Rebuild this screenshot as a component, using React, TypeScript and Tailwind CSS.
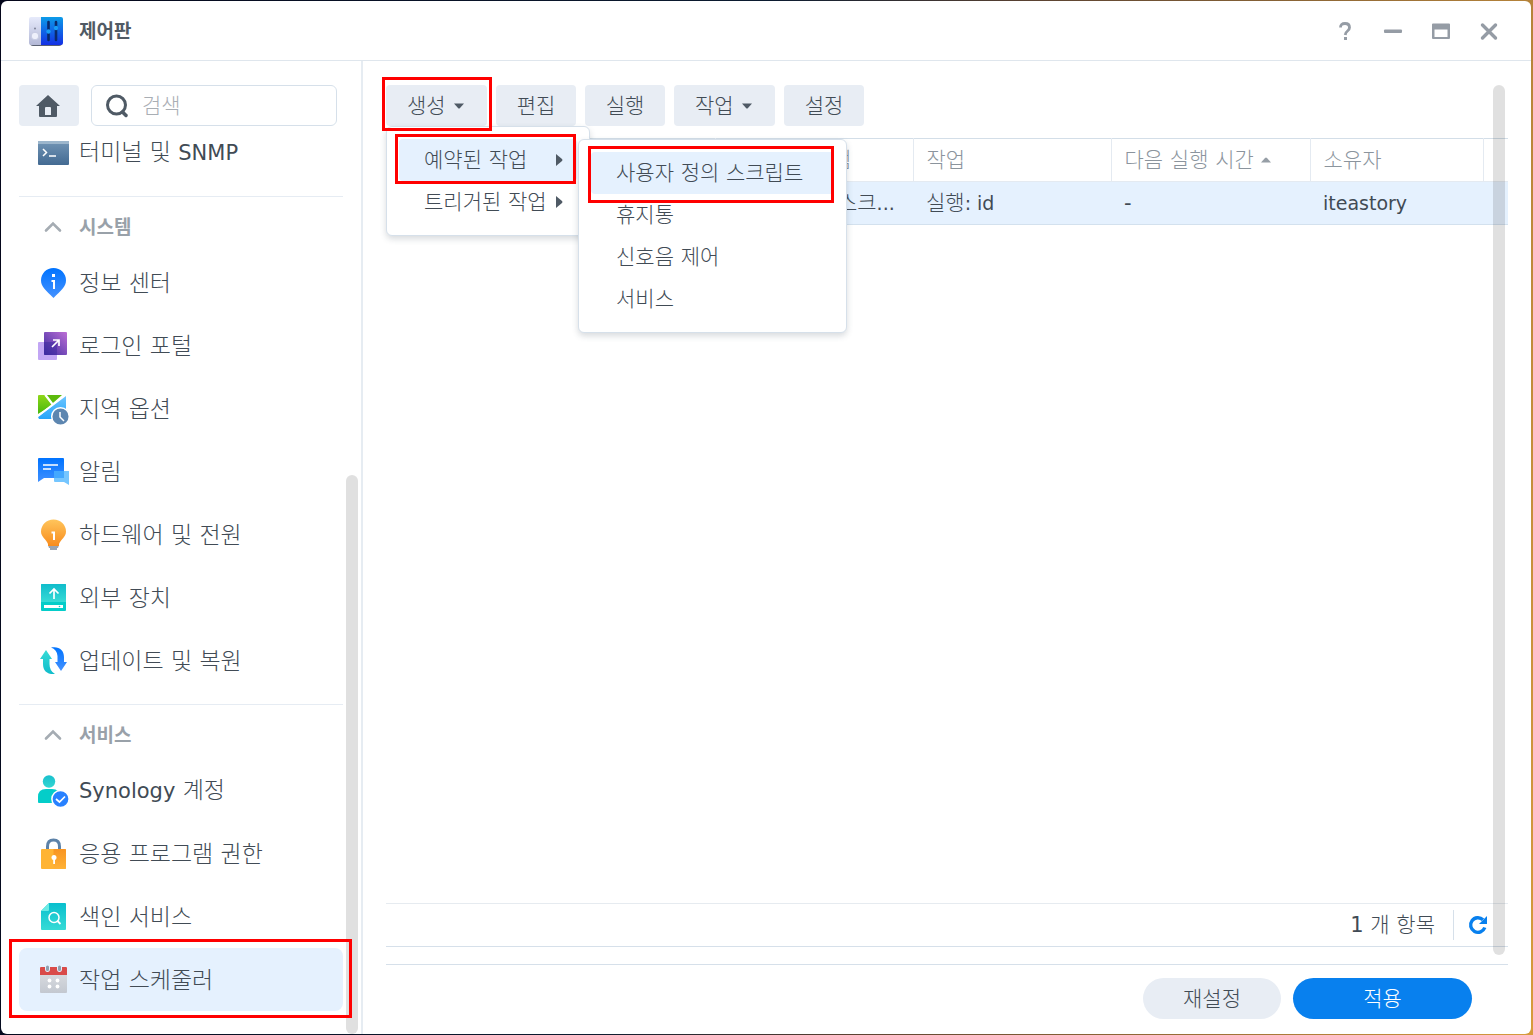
import React from "react";

function Highlight({ className }: { className: string }) {
  return <span aria-hidden="true" className={"pointer-events-none absolute z-20 border-3 border-[#ff0000] " + className} />;
}

function Latin({ children }: { children: string }) {
  return <span className="font-normal">{children}</span>;
}

function AppIcon() {
  return (
    <svg width="34" height="32" viewBox="0 0 34 32" aria-hidden="true">
      <defs>
        <linearGradient id="appBlue" x1="0" y1="0" x2="0" y2="1">
          <stop offset="0" stopColor="#0c9be8" />
          <stop offset="1" stopColor="#1430e4" />
        </linearGradient>
        <linearGradient id="appGray" x1="0" y1="0" x2="0" y2="1">
          <stop offset="0" stopColor="#e6eafb" />
          <stop offset="1" stopColor="#b3b8d6" />
        </linearGradient>
      </defs>
      <rect x="1" y="4" width="32" height="27" rx="3" fill="#5a6072" />
      <path d="M2 2H12V30H2Q0 30 0 28V4Q0 2 2 2Z" fill="url(#appGray)" />
      <path d="M12 2H32Q34 2 34 4V28Q34 30 32 30H12Z" fill="url(#appBlue)" />
      <circle cx="6" cy="13.500" r="1" fill="#7d8297" />
      <circle cx="6" cy="21" r="3.800" fill="#eef0fb" stroke="#c5cae2" strokeWidth="1" />
      <path d="M19.500 7V25M27 7V25" stroke="#0a2a6b" strokeWidth="2.600" strokeLinecap="round" />
      <circle cx="19.500" cy="16.500" r="2.200" fill="#189cf5" />
      <circle cx="27" cy="13" r="2.200" fill="#189cf5" />
    </svg>
  );
}

function Svg({ children }: { children: React.ReactNode }) {
  return (
    <svg width="32" height="32" viewBox="0 0 32 32" className="shrink-0" aria-hidden="true">
      {children}
    </svg>
  );
}

function Grad({ id, a, b, diagonal }: { id: string; a: string; b: string; diagonal?: boolean }) {
  return (
    <defs>
      <linearGradient id={id} x1={diagonal ? "1" : "0"} y1="0" x2="0" y2="1">
        <stop offset="0" stopColor={a} />
        <stop offset="1" stopColor={b} />
      </linearGradient>
    </defs>
  );
}

const terminalIcon = (
  <Svg>
    <Grad id="term" a="#7295b5" b="#436a92" />
    <rect x="0" y="4" width="31" height="24" rx="1" fill="url(#term)" />
    <path d="M1 4H30Q31 4 31 5V7H0V5Q0 4 1 4Z" fill="#9cb6cc" />
    <path d="M5 12L8.500 15.500L5 19M11 19H18" fill="none" stroke="#fff" strokeWidth="1.500" />
  </Svg>
);
const infoIcon = (
  <Svg>
    <Grad id="info" a="#0073ff" b="#4592ff" />
    <path d="M15.500 1C8.500 1 3 6.500 3 13.300C3 20 8 23.500 15.500 31C23 23.500 28 20 28 13.300C28 6.500 22.500 1 15.500 1Z" fill="url(#info)" />
    <path d="M14 7H17V10H14ZM13.500 13H17V22H15V15H13.500Z" fill="#fff" />
  </Svg>
);
const portalIcon = (
  <Svg>
    <Grad id="portal" a="#bd6fd5" b="#3a2ba0" diagonal />
    <rect x="0" y="12" width="19" height="18" rx="1" fill="#c2a6f4" />
    <rect x="6" y="2" width="23" height="23" rx="1" fill="url(#portal)" />
    <path d="M6 12H19V25H6Z" fill="#3b27a0" opacity=".5" />
    <path d="M14 17L21 10M15 10H21V16" fill="none" stroke="#fff" strokeWidth="1.700" />
  </Svg>
);
const regionIcon = (
  <Svg>
    <Grad id="lake" a="#6dc5ff" b="#25a5fa" />
    <Grad id="land" a="#8fd719" b="#46b80d" />
    <path d="M1 2H7L14 12L0 21V3Q0 2 1 2Z" fill="url(#land)" />
    <path d="M9 2H24L15 10Z" fill="#5cba0c" />
    <path d="M28 3V25Q28 26 27 26H1L0 24Z" fill="url(#lake)" />
    <path d="M0 23L27 2M7 2L14 11" stroke="#fff" strokeWidth="1.600" />
    <circle cx="22.500" cy="23.500" r="8.800" fill="#5d86b0" stroke="#fff" strokeWidth="1.500" />
    <path d="M22 19V24L26 28" fill="none" stroke="#fff" strokeWidth="1.500" />
  </Svg>
);
const noticeIcon = (
  <Svg>
    <Grad id="notice" a="#0073ff" b="#4090ff" />
    <path d="M1 2H25Q26 2 26 3V22H6L0 26V3Q0 2 1 2Z" fill="url(#notice)" />
    <path d="M16 15H31V29L26 26H17Q16 26 16 25Z" fill="#75c6ff" />
    <path d="M16 15H26V22H16Z" fill="#43a8ff" />
    <path d="M5 9H20M5 13H13" stroke="#fff" strokeWidth="1.500" />
  </Svg>
);
const bulbIcon = (
  <Svg>
    <Grad id="bulb" a="#ffc55c" b="#f88c1c" />
    <path d="M10 26H21L20 29H19V31H12V29H11Z" fill="#9aa4af" />
    <path d="M15.500 0.500C8.500 0.500 3 6 3 12.500C3 18 8 20 10 25V27H21V25C23 20 28 18 28 12.500C28 6 22.500 0.500 15.500 0.500Z" fill="url(#bulb)" />
    <path d="M13.500 12.500H17V21H15V14.500H13.500Z" fill="#fff" />
  </Svg>
);
const driveIcon = (
  <Svg>
    <Grad id="drive" a="#10bccb" b="#36dbd6" />
    <rect x="3" y="2" width="25" height="27" rx="1" fill="#04cdc9" />
    <path d="M4 2H27Q28 2 28 3V20H3V3Q3 2 4 2Z" fill="url(#drive)" />
    <path d="M16 17V7M11.500 11.500L16 7L20.500 11.500" fill="none" stroke="#fff" strokeWidth="1.700" />
    <path d="M6 23H25V26H6Z" fill="#fff" />
    <circle cx="21.500" cy="24.500" r=".8" fill="#04cdc9" />
  </Svg>
);
const updateIcon = (
  <Svg>
    <Grad id="upA" a="#36dbd6" b="#10bccb" />
    <Grad id="upB" a="#0073ff" b="#4592ff" />
    <path d="M8 5L14 14H11.500V19Q11.500 26 17 29C9 29.500 5 26 5 19V14H2Z" fill="url(#upA)" />
    <path d="M23 26L17 17H19.500V11Q19 4.500 13 2.500C21 1 26 5 26 12V17H29Z" fill="url(#upB)" />
  </Svg>
);
const accountIcon = (
  <Svg>
    <Grad id="acc" a="#18c0cd" b="#34d6d2" />
    <circle cx="11" cy="6.500" r="6.200" fill="url(#acc)" />
    <path d="M8 14H14Q22 14 22 22V28H1Q0 28 0 27V22Q0 14 8 14Z" fill="#04cdc9" />
    <circle cx="22.500" cy="24" r="8.600" fill="#2881ff" stroke="#fff" strokeWidth="1.500" />
    <path d="M18 24L21.500 27L27 21.500" fill="none" stroke="#fff" strokeWidth="1.700" />
  </Svg>
);
const lockIcon = (
  <Svg>
    <Grad id="lock" a="#f89422" b="#ffb236" />
    <path d="M9.500 13V8.500Q9.500 2 15.500 2T21.500 8.500V13" fill="none" stroke="#5d82a8" strokeWidth="3" />
    <rect x="3" y="11" width="25" height="20" rx="1" fill="#ffb434" />
    <path d="M15.500 11H27Q28 11 28 12V30Q28 31 27 31H15.500Z" fill="url(#lock)" />
    <circle cx="16" cy="19.500" r="2.500" fill="#fff" />
    <path d="M15.200 20H17V26H15.200Z" fill="#fff" />
  </Svg>
);
const indexIcon = (
  <Svg>
    <Grad id="index" a="#08bfce" b="#36dbd6" />
    <path d="M11 2H27Q28 2 28 3V28Q28 29 27 29H4Q3 29 3 28V10Z" fill="url(#index)" />
    <path d="M11 2V9Q11 10 10 10H3Z" fill="#6bebe4" />
    <circle cx="16" cy="16.500" r="5" fill="none" stroke="#fff" strokeWidth="1.500" />
    <path d="M19.500 20L22.500 23" stroke="#fff" strokeWidth="1.800" />
  </Svg>
);
const calendarIcon = (
  <Svg>
    <Grad id="cal" a="#d6d9de" b="#c3c8d0" />
    <path d="M2 11H29V28Q29 29 28 29H3Q2 29 2 28Z" fill="url(#cal)" />
    <path d="M3 3H28Q29 3 29 4V11H2V4Q2 3 3 3Z" fill="#d94b49" />
    <path d="M7 2H12V5Q12 8 9.500 8T7 5ZM19 2H24V5Q24 8 21.500 8T19 5Z" fill="#e6f2fe" />
    <path d="M9.500 3V5.500M21.500 3V5.500" stroke="#8fa0b0" strokeWidth="3" strokeLinecap="round" />
    <g fill="#fff">
      <circle cx="11.500" cy="16.500" r="1.900" />
      <circle cx="19.500" cy="16.500" r="1.900" />
      <circle cx="11.500" cy="22.500" r="1.900" />
      <circle cx="19.500" cy="22.500" r="1.900" />
    </g>
  </Svg>
);

type Item = { icon: React.ReactNode; label: React.ReactNode; active?: boolean };

const systemItems: Item[] = [
  { icon: infoIcon, label: "정보 센터" },
  { icon: portalIcon, label: "로그인 포털" },
  { icon: regionIcon, label: "지역 옵션" },
  { icon: noticeIcon, label: "알림" },
  { icon: bulbIcon, label: "하드웨어 및 전원" },
  { icon: driveIcon, label: "외부 장치" },
  { icon: updateIcon, label: "업데이트 및 복원" },
];

const serviceItems: Item[] = [
  { icon: accountIcon, label: <><span className="text-[21px] font-normal">Synology</span> 계정</> },
  { icon: lockIcon, label: "응용 프로그램 권한" },
  { icon: indexIcon, label: "색인 서비스" },
  { icon: calendarIcon, label: "작업 스케줄러", active: true },
];

function NavItem({ icon, label, active }: Item) {
  return (
    <li className="relative">
      <a
        href="#"
        aria-current={active ? "page" : undefined}
        className={"flex h-[63px] items-center gap-[9px] rounded-lg pl-[19px] text-[23px] leading-8 whitespace-nowrap " + (active ? "bg-[#e5f1fe]" : "")}
      >
        {icon}
        <span>{label}</span>
      </a>
      {active && <Highlight className="-top-[9px] -right-[9px] -bottom-[7px] -left-[10px]" />}
    </li>
  );
}

function NavGroup({ title, items }: { title: string; items: Item[] }) {
  return (
    <section className="mt-3 border-t border-[#e6ecf3]">
      <h2>
        <button className="flex h-[54px] w-full items-center gap-[17px] pt-1.5 pl-[25px] text-[19px] font-bold text-[#99a1a9]">
          <svg width="18" height="12" viewBox="0 0 18 12" aria-hidden="true">
            <path d="M2 9.500L9 2.500L16 9.500" fill="none" stroke="#a5acb3" strokeWidth="2.600" strokeLinecap="round" />
          </svg>
          {title}
        </button>
      </h2>
      <ul>
        {items.map((item, i) => (
          <NavItem key={i} {...item} />
        ))}
      </ul>
    </section>
  );
}

function Sidebar() {
  return (
    <aside className="relative flex w-[362px] shrink-0 flex-col border-r-2 border-[#e6ecf2] pt-6 pr-[18px] pl-[18px]">
      <div className="flex gap-3 pr-1.5">
        <button aria-label="홈" className="flex h-[41px] w-[60px] items-center justify-center rounded-sm bg-[#e8edf4]">
          <svg width="26" height="24" viewBox="0 0 26 24" aria-hidden="true">
            <path fillRule="evenodd" d="M12 1L24 12H21V22Q21 23 20 23H4Q3 23 3 22V12H0ZM9 14V21H15V14Q15 13 14 13H10Q9 13 9 14Z" fill="#4f5a65" />
          </svg>
        </button>
        <label className="flex h-[41px] min-w-0 flex-1 items-center gap-3 rounded-md border border-[#d6e0ea] px-3">
          <svg width="26" height="26" viewBox="0 0 26 26" className="shrink-0" aria-hidden="true">
            <circle cx="12.500" cy="12" r="9" fill="none" stroke="#4f5a65" strokeWidth="3" />
            <path d="M18.500 19L22 22.500" stroke="#4f5a65" strokeWidth="3.500" strokeLinecap="round" />
          </svg>
          <input type="text" aria-label="검색" placeholder="검색" className="w-full min-w-0 bg-transparent text-[21px] font-light outline-none placeholder:text-[#a9aeb4]" />
        </label>
      </div>
      <nav className="-mr-[18px] -ml-[18px] overflow-hidden pr-[18px] pb-5 pl-[18px]">
        <ul className="-mt-[5px]">
          <NavItem icon={terminalIcon} label={<>터미널 및 <span className="text-[21px] font-normal">SNMP</span></>} />
        </ul>
        <NavGroup title="시스템" items={systemItems} />
        <NavGroup title="서비스" items={serviceItems} />
      </nav>
      <div aria-hidden="true" className="absolute right-[3px] bottom-0 h-[559px] w-3 rounded-full bg-[#e0e0e0]" />
    </aside>
  );
}

function Caret() {
  return (
    <svg width="10" height="6" viewBox="0 0 10 6" aria-hidden="true">
      <path d="M0 0.500H10L6 5Q5 6 4 5Z" fill="#4f5a65" />
    </svg>
  );
}

function ToolButton({ label, menu }: { label: string; menu?: boolean }) {
  return (
    <button
      aria-haspopup={menu ? "menu" : undefined}
      className={"flex h-[41px] items-center rounded-sm bg-[#e8edf4] " + (menu ? "w-[101px] gap-2 pl-[21px]" : "w-20 justify-center")}
    >
      {label}
      {menu && <Caret />}
    </button>
  );
}

function MenuEntry({ label, active, sub, children }: { label: string; active?: boolean; sub?: boolean; children?: React.ReactNode }) {
  return (
    <li role="none" className="relative">
      <button
        role="menuitem"
        className={"flex h-[42px] w-full items-center justify-between rounded-sm pr-3.5 pl-[25px] whitespace-nowrap " + (active ? "bg-[#e5f1fe]" : "")}
      >
        {label}
        {sub && (
          <svg width="7" height="14" viewBox="0 0 7 14" aria-hidden="true">
            <path d="M0 1L6 6Q7 7 6 8L0 13Z" fill="#4f5a65" />
          </svg>
        )}
      </button>
      {children}
    </li>
  );
}

const menuBox = "absolute z-10 rounded-md border border-[#d6e0ea] bg-white py-3 shadow-[0_3px_6px_rgba(60,75,90,0.2)] ";

function CreateMenu() {
  return (
    <ul role="menu" className={menuBox + "top-full left-0 w-[204px] px-3"}>
      <MenuEntry label="예약된 작업" active sub>
        <Highlight className="-top-[5px] right-px -bottom-[3px] -left-1" />
        <ul role="menu" className={menuBox + "top-0 left-[179px] w-[269px] px-3"}>
          <MenuEntry label="사용자 정의 스크립트" active>
            <Highlight className="-top-[6px] right-0 -bottom-[9px] -left-[3px]" />
          </MenuEntry>
          <MenuEntry label="휴지통" />
          <MenuEntry label="신호음 제어" />
          <MenuEntry label="서비스" />
        </ul>
      </MenuEntry>
      <MenuEntry label="트리거된 작업" sub />
    </ul>
  );
}

function TaskTable() {
  const head = "border-r border-[#e4eaf1] pl-[13px] text-left font-light";
  return (
    <table className="mt-3 w-full table-fixed border-collapse whitespace-nowrap">
      <colgroup>
        <col className="w-[329px]" />
        <col className="w-[198px]" />
        <col className="w-[198px]" />
        <col className="w-[199px]" />
        <col className="w-[173px]" />
        <col />
      </colgroup>
      <thead>
        <tr className="h-[43px] border-y border-t-[#d3dee8] border-b-[#e4eaf1] text-[#8b949d]">
          <td className="border-r border-[#e4eaf1]" />
          <th className={head}>응용 프로그램</th>
          <th className={head}>작업</th>
          <th className={head}>
            <span className="flex items-center gap-[7px]">
              다음 실행 시간
              <svg width="10" height="6" viewBox="0 0 10 6" aria-hidden="true">
                <path d="M0 5.500H10L6 1Q5 0 4 1Z" fill="#969ea6" />
              </svg>
            </span>
          </th>
          <th className={head}>소유자</th>
          <td />
        </tr>
      </thead>
      <tbody>
        <tr className="h-[43px] border-b border-[#d3e1ee] bg-[#e5f1fe]">
          <td />
          <td className="pl-[13px]">사용자 정의 스크<span className="text-[19px] font-normal">...</span></td>
          <td className="pl-[13px]">실행<span className="text-[19px] font-normal">: id</span></td>
          <td className="pl-[13px]"><Latin>-</Latin></td>
          <td className="pl-[13px] text-[19px] font-normal">iteastory</td>
          <td />
        </tr>
      </tbody>
    </table>
  );
}

function TitleBar() {
  return (
    <header className="flex h-[60px] shrink-0 items-center border-b border-[#dfe6ed] pl-7">
      <AppIcon />
      <h1 className="ml-4 text-[19px] font-bold text-[#505a64]">제어판</h1>
      <div className="ml-auto flex pr-[18px] text-[#959ca5]">
        <button aria-label="도움말" className="flex size-12 items-center justify-center">
          <svg width="20" height="20" viewBox="0 0 20 20" fill="none" stroke="currentColor" strokeWidth="2.800" aria-hidden="true">
            <path d="M5.500 6.500Q5.500 2.500 10 2.500T14.500 6.500Q14.500 8.500 12.500 10T10.200 14" />
            <path d="M9 16H12V19H9Z" fill="currentColor" stroke="none" />
          </svg>
        </button>
        <button aria-label="최소화" className="flex size-12 items-center justify-center">
          <svg width="20" height="20" viewBox="0 0 20 20" aria-hidden="true">
            <rect x="1" y="8.500" width="18" height="3.500" rx="1" fill="currentColor" />
          </svg>
        </button>
        <button aria-label="최대화" className="flex size-12 items-center justify-center">
          <svg width="20" height="20" viewBox="0 0 20 20" aria-hidden="true">
            <path fillRule="evenodd" d="M2 2.500H18Q19 2.500 19 3.500V17Q19 18 18 18H2Q1 18 1 17V3.500Q1 2.500 2 2.500ZM3.500 8.500V16H16.500V8.500Z" fill="currentColor" />
          </svg>
        </button>
        <button aria-label="닫기" className="flex size-12 items-center justify-center">
          <svg width="20" height="20" viewBox="0 0 20 20" aria-hidden="true">
            <path d="M3.500 4L16.500 17M16.500 4L3.500 17" stroke="currentColor" strokeWidth="3.400" strokeLinecap="round" />
          </svg>
        </button>
      </div>
    </header>
  );
}

export default function App() {
  return (
    <div className="flex min-h-screen flex-col bg-[linear-gradient(100deg,#04061a_0%,#0b1b30_45%,#5a4232_60%,#d79b3c_100%)] pt-px pr-0.5 pb-px pl-px font-['DejaVu_Sans','Noto_Sans_CJK_KR',sans-serif] text-[21px] leading-8 font-light text-[#414b55]">
      <div className="flex flex-1 flex-col overflow-hidden rounded-md bg-white">
        <TitleBar />
        <div className="flex flex-1">
          <Sidebar />
          <main className="relative flex min-w-0 flex-1 flex-col px-[23px] pt-6">
            <div className="flex gap-[9px]">
              <div className="relative">
                <ToolButton label="생성" menu />
                <CreateMenu />
                <Highlight className="-top-[8px] -right-[5px] -bottom-[5px] -left-1" />
              </div>
              <ToolButton label="편집" />
              <ToolButton label="실행" />
              <ToolButton label="작업" menu />
              <ToolButton label="설정" />
            </div>
            <TaskTable />
            <div className="mt-auto flex h-11 items-center justify-end border-y border-t-[#e6ebf0] border-b-[#d6e0ea] pr-5">
              <span><Latin>1</Latin> 개 항목</span>
              <span className="mr-3.5 ml-[18px] h-[30px] w-px bg-[#d6e0ea]" />
              <button aria-label="새로 고침">
                <svg width="20" height="20" viewBox="0 0 20 20" aria-hidden="true">
                  <path d="M16.800 12.500A7.300 7.300 0 1 1 15 4.800" fill="none" stroke="#0880ee" strokeWidth="3.400" />
                  <path d="M19 1V9H11Z" fill="#0880ee" />
                </svg>
              </button>
            </div>
            <div className="mt-[17px] flex justify-end gap-3 border-t border-[#d6e0ea] pt-[13px] pr-9 pb-[15px]">
              <button className="h-[41px] w-[138px] rounded-full bg-[#e8edf4]">재설정</button>
              <button className="h-[41px] w-[179px] rounded-full bg-[#0880ee] text-white">적용</button>
            </div>
            <div aria-hidden="true" className="absolute top-6 right-[26px] bottom-[79px] w-3 rounded-full bg-black/12" />
          </main>
        </div>
      </div>
    </div>
  );
}
